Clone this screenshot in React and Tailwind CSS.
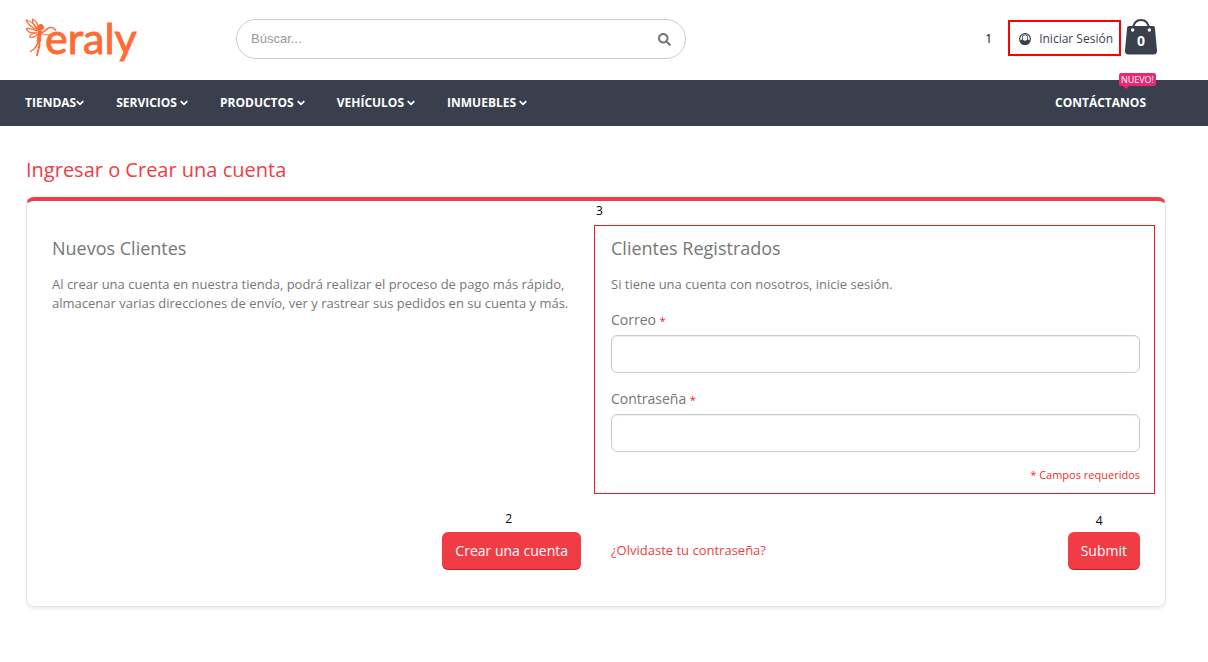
import React from "react";
import { FaSearch } from "react-icons/fa";

const menu = ["TIENDAS", "SERVICIOS", "PRODUCTOS", "VEHÍCULOS", "INMUEBLES"];

function Logo() {
  return (
    <a href="#" aria-label="eraly" className="block w-[120px] shrink-0">
      <svg viewBox="0 -4 120 58" width="120" height="58" fill="none">
        <g stroke="#ff6b35" strokeWidth="1.2" strokeLinecap="round" strokeLinejoin="round">
          <path d="M12 16C8 14 3 11 1 6c4 1 9 4 12 10" />
          <path d="M13 16C9 12 7 9 7.500 5c3 1 6 5 6 11" />
          <path d="M12 17C8 15 4 14 1.500 14.500c1 4 5 5 10 4" />
          <path d="M11.500 19c-3 0-6 1-7 4 3 1 6 0 8-3" />
        </g>
        <g stroke="#ff6b35" strokeLinecap="round" strokeLinejoin="round">
          <path d="M16 18.500c4 .5 5-4.500 9-5 2.500-.3 4.500 1 5.500 2.500" strokeWidth="1.500" />
          <path d="M15.500 19c4 1.800 7 2.500 10 1.500" strokeWidth="1" />
          <path d="M14 26c1 3 .5 6-.5 9l-1.500 6" strokeWidth="1.900" />
          <path d="M13.500 26c-.5 4-1.500 6-4 8.500L5.500 37.500" strokeWidth="1.500" />
        </g>
        <g fill="#ff6b35">
          <circle cx="16" cy="13.300" r="2.900" />
          <path d="M12.500 12.500c1-2.500 3.500-3 5-2l-3 6-2 .5z" />
          <path d="M13 16l4 .5c.5 2-.8 4-1 6 .5 2 .5 4-1 6l-3.200-1c-.5-2 .8-4 .5-6z" />
        </g>
        <text x="20" y="40" fill="#ff6b35" stroke="#ff6b35" strokeWidth=".9" fontSize="43" fontFamily="Lato, sans-serif">eraly</text>
      </svg>
    </a>
  );
}

function UserIcon() {
  return (
    <svg viewBox="0 0 12 12" width="12" height="12" className="shrink-0">
      <circle cx="6" cy="6" r="5.400" fill="#fff" stroke="#3a3f4e" strokeWidth="1.200" />
      <path d="M.8 7.800C1.600 7.300 2.600 7.100 3 6.600V3.800C3.300 2.300 4.500 1.600 6 1.600s2.700.7 3 2.200v2.800c.4.500 1.400.7 2.200 1.200a5.300 5.300 0 0 1-10.400 0z" fill="#3a3f4e" />
      <ellipse cx="6" cy="5" rx="2.300" ry="2.800" fill="#fff" />
    </svg>
  );
}

function Cart() {
  return (
    <button type="button" aria-label="Carrito" className="relative mb-1 ml-1 h-9 w-8 shrink-0">
      <svg viewBox="0 0 32 36" width="32" height="36">
        <path d="M4 7h24c1.200 0 1.700.7 1.900 1.800L32 31.500c.2 2.500-1 4-3.300 4H3.300C1 35.500-.2 34 0 31.500L2.100 8.800C2.300 7.700 2.800 7 4 7z" fill="#3a3f4e" />
        <path d="M8 10C8.500 4 11.500 1 16 1s7.500 3 8 9" fill="none" stroke="#3a3f4e" strokeWidth="2" />
        <circle cx="7.700" cy="11" r="1.700" fill="#fff" />
        <circle cx="24.300" cy="11" r="1.700" fill="#fff" />
      </svg>
      <span className="absolute inset-x-0 top-3 text-center text-sm leading-5 font-bold text-white">0</span>
    </button>
  );
}

function Chevron() {
  return (
    <svg viewBox="0 0 8 6" width="8" height="6">
      <path d="M.7 1.200L4 4.300l3.300-3.100" fill="none" stroke="#fff" strokeWidth="1.800" />
    </svg>
  );
}

function Note({ className, children }) {
  return <span className={"text-xs leading-4 text-black " + className}>{children}</span>;
}

function Field({ id, label, type }) {
  return (
    <div className="mb-4">
      <label htmlFor={id} className="mb-1 block text-sm leading-5">
        {label} <span className="text-[11px] text-[#eb1c24]">*</span>
      </label>
      <input
        id={id}
        type={type}
        className="block h-[38px] w-full rounded-md border border-[#ccc] bg-white px-3 text-sm shadow-[inset_0_1px_1px_rgba(0,0,0,0.075)] outline-none"
      />
    </div>
  );
}

const buttonClass =
  "h-[38px] rounded-md border-b border-[#e0131d] bg-[#f03d45] px-[13px] text-sm text-white";

export default function App() {
  return (
    <div className="min-h-screen bg-white font-['Open_Sans',sans-serif] text-[13px] text-[#777]">
      <header className="flex h-20 items-center pr-[51px] pb-0.5 pl-[25px]">
        <Logo />
        <form role="search" className="ml-[91px] flex h-10 w-[450px] items-center rounded-full border border-[#ccc] pr-[11px] pl-[14px]">
          <input
            type="search"
            aria-label="Búscar"
            placeholder="Búscar..."
            className="min-w-0 flex-1 bg-transparent font-['Liberation_Sans',sans-serif] text-[13px] outline-none placeholder:text-[#999]"
          />
          <button type="button" aria-label="Búscar" className="flex h-8 w-4 items-center">
            <FaSearch size={13} />
          </button>
        </form>
        <div className="ml-auto flex items-center">
          <Note className="mr-4">1</Note>
          <a href="#" className="mb-0.5 flex h-9 items-center gap-2 border-2 border-[#f00] pt-0.5 pr-1.5 pl-[9px] text-xs text-[#3a3f4e]">
            <UserIcon />
            Iniciar Sesión
          </a>
          <Cart />
        </div>
      </header>

      <nav className="flex h-[46px] items-center gap-8 bg-[#3a3f4e] pr-[62px] pl-[25px] text-xs font-bold text-white">
        {menu.map((item, i) => (
          <a key={item} href="#" className={"flex items-center " + (i ? "gap-[3px]" : "")}>
            {item}
            <Chevron />
          </a>
        ))}
        <a href="#" className="relative ml-auto">
          CONTÁCTANOS
          <span className="absolute -top-[22px] -right-2.5 rounded-xs bg-[#eb2771] px-0.5 text-[9px] leading-[13px] font-normal">
            NUEVO!
            <span className="absolute top-full left-1 h-0 w-0 border-x-[3px] border-t-[3px] border-x-transparent border-t-[#eb2771]" />
          </span>
        </a>
      </nav>

      <main className="pt-[30px] pr-[42px] pb-14 pl-[26px]">
        <h1 className="text-xl leading-7 text-[#f03d45]">Ingresar o Crear una cuenta</h1>

        <section className="mt-[13px] grid grid-cols-2 gap-x-[30px] rounded-lg border border-t-4 border-[#e6e6e6] border-t-[#f03d45] px-[25px] pt-[33px] pb-9 shadow-[0_2px_3px_rgba(0,0,0,0.08)]">
          <div>
            <h2 className="text-lg leading-7">Nuevos Clientes</h2>
            <p className="mt-[13px] leading-[19px]">
              Al crear una cuenta en nuestra tienda, podrá realizar el proceso de pago más rápido, almacenar varias direcciones de envío, ver y rastrear sus pedidos en su cuenta y más.
            </p>
          </div>

          <form id="login" className="relative">
            <Note className="absolute -top-[31px] -left-[15px]">3</Note>
            <div className="pointer-events-none absolute -top-[9px] -right-[15px] -bottom-3 -left-[17px] border border-[#eb1c24]" />
            <h2 className="text-lg leading-7">Clientes Registrados</h2>
            <p className="mt-[13px] mb-4 leading-[19px]">Si tiene una cuenta con nosotros, inicie sesión.</p>
            <Field id="correo" label="Correo" type="email" />
            <Field id="contrasena" label="Contraseña" type="password" />
            <p className="text-right text-[11px] leading-[14px] text-[#eb2f27]">* Campos requeridos</p>
          </form>

          <div className="mt-[50px] flex justify-end">
            <div className="relative">
              <Note className="absolute -top-[21px] left-[63px]">2</Note>
              <button type="button" className={buttonClass}>Crear una cuenta</button>
            </div>
          </div>

          <div className="mt-[50px] flex items-center justify-between">
            <a href="#" className="text-[#f03d45]">¿Olvidaste tu contraseña?</a>
            <div className="relative">
              <Note className="absolute -top-[19px] left-7">4</Note>
              <button type="submit" form="login" className={buttonClass}>Submit</button>
            </div>
          </div>
        </section>
      </main>
    </div>
  );
}
